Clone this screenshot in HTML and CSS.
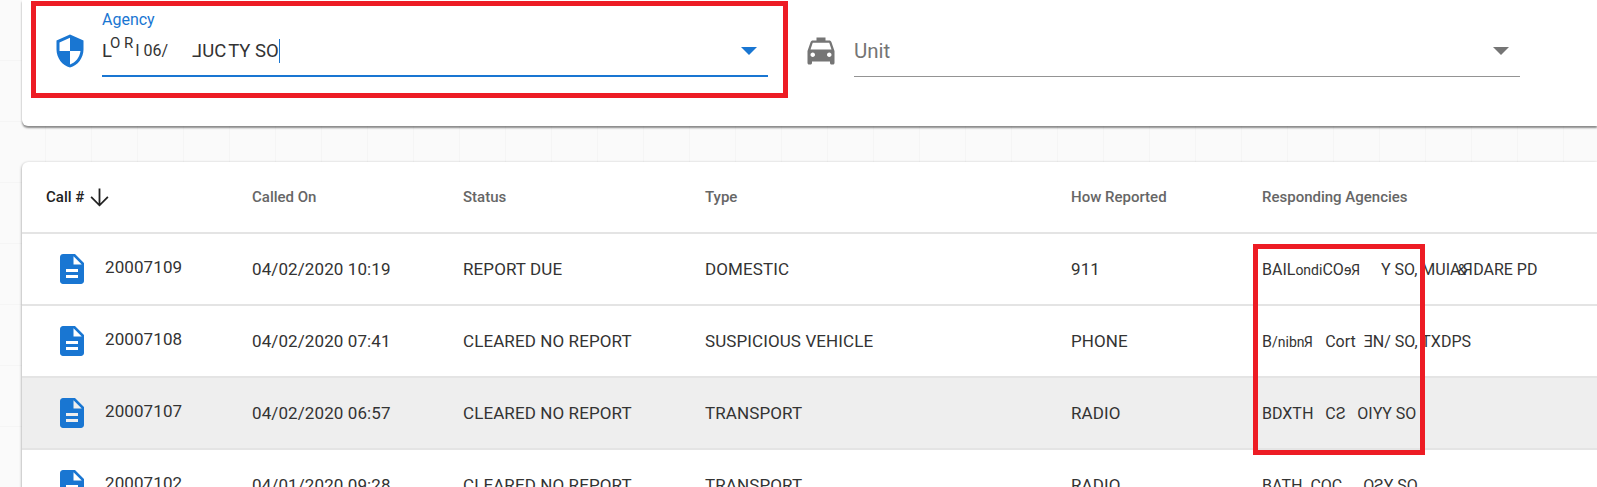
FILE: index.html
```html
<!DOCTYPE html>
<html>
<head>
    <title>Calls</title>
    <link rel="stylesheet" href="styles.css">
</head>
<body>
    <div class="page">
        <div class="card filters">
            <div class="field field-agency">
                <svg class="icon icon-blue" viewBox="0 0 24 24"><path d="M12 1L3 5v6c0 5.55 3.84 10.74 9 12 5.16-1.26 9-6.45 9-12V5l-9-4zm0 10.99h7c-.53 4.12-3.28 7.79-7 8.94V12H5V6.3l7-3.11v8.8z"/></svg>
                <div class="select select-active">
                    <label class="select-label">Agency</label>
                    <div class="select-value">
                        <span class="garble">L<sup>O R</sup></span>
                        <span class="gap gap-s"></span>
                        <span class="garble garble-s">I 06/</span>
                        <span class="gap"></span>
                        <span class="garble"><span class="flip">L</span>UC</span>
                        <span class="gap gap-xs"></span>
                        <span class="garble">TY SO</span><span class="caret"></span>
                    </div>
                    <span class="arrow"></span>
                </div>
            </div>
            <div class="field field-unit">
                <svg class="icon icon-grey" viewBox="0 0 24 24"><path d="M18.92 6.01C18.72 5.42 18.16 5 17.5 5H15V3H9v2H6.5c-.66 0-1.21.42-1.42 1.01L3 12v8c0 .55.45 1 1 1h1c.55 0 1-.45 1-1v-1h12v1c0 .55.45 1 1 1h1c.55 0 1-.45 1-1v-8l-2.08-5.99zM6.5 16c-.83 0-1.5-.67-1.5-1.5S5.67 13 6.5 13s1.5.67 1.5 1.5S7.33 16 6.5 16zm11 0c-.83 0-1.5-.67-1.5-1.5s.67-1.5 1.5-1.5 1.5.67 1.5 1.5-.67 1.5-1.5 1.5zM5 11l1.5-4.5h11L19 11H5z"/></svg>
                <div class="select">
                    <div class="select-value placeholder">Unit</div>
                    <span class="arrow"></span>
                </div>
            </div>
        </div>

        <div class="card results">
            <table>
                <thead>
                    <tr>
                        <th class="col-call sorted">Call # <svg class="sort-icon" viewBox="0 0 24 24"><path d="M20 12l-1.1-1.1L12.8 17V4h-1.6v13l-6.1-6.1L4 12l8 8 8-8z"/></svg></th>
                        <th class="col-date">Called On</th>
                        <th class="col-status">Status</th>
                        <th class="col-type">Type</th>
                        <th class="col-how">How Reported</th>
                        <th>Responding Agencies</th>
                    </tr>
                </thead>
                <tbody>
                    <tr>
                        <td><div class="call"><svg class="icon icon-blue" viewBox="0 0 24 24"><path d="M14 2H6c-1.1 0-1.99.9-1.99 2L4 20c0 1.1.89 2 1.99 2H18c1.1 0 2-.9 2-2V8l-6-6zm2 16H8v-2h8v2zm0-4H8v-2h8v2zm-3-5V3.5L18.5 9H13z"/></svg><span>20007109</span></div></td>
                        <td>04/02/2020 10:19</td>
                        <td>REPORT DUE</td>
                        <td>DOMESTIC</td>
                        <td>911</td>
                        <td class="agencies">BAIL<small>ondi</small>CO<small class="flip">Re</small><span class="gap-l"></span>Y SO, MUIA<small class="tight">&amp;</small><span class="flip tight">R</span>DARE PD</td>
                    </tr>
                    <tr>
                        <td><div class="call"><svg class="icon icon-blue" viewBox="0 0 24 24"><path d="M14 2H6c-1.1 0-1.99.9-1.99 2L4 20c0 1.1.89 2 1.99 2H18c1.1 0 2-.9 2-2V8l-6-6zm2 16H8v-2h8v2zm0-4H8v-2h8v2zm-3-5V3.5L18.5 9H13z"/></svg><span>20007108</span></div></td>
                        <td>04/02/2020 07:41</td>
                        <td>CLEARED NO REPORT</td>
                        <td>SUSPICIOUS VEHICLE</td>
                        <td>PHONE</td>
                        <td class="agencies">B<small>/nibn</small><small class="flip">R</small><span class="gap-m"></span>Cort<span class="gap-s2"></span><span class="flip">E</span>N/ SO, TXDPS</td>
                    </tr>
                    <tr class="row-selected">
                        <td><div class="call"><svg class="icon icon-blue" viewBox="0 0 24 24"><path d="M14 2H6c-1.1 0-1.99.9-1.99 2L4 20c0 1.1.89 2 1.99 2H18c1.1 0 2-.9 2-2V8l-6-6zm2 16H8v-2h8v2zm0-4H8v-2h8v2zm-3-5V3.5L18.5 9H13z"/></svg><span>20007107</span></div></td>
                        <td>04/02/2020 06:57</td>
                        <td>CLEARED NO REPORT</td>
                        <td>TRANSPORT</td>
                        <td>RADIO</td>
                        <td class="agencies">BDXT<span class="flip">H</span><span class="gap-m"></span>C<span class="flip">S</span><span class="gap-m"></span>OI<span class="flip">Y</span>Y SO</td>
                    </tr>
                    <tr>
                        <td><div class="call"><svg class="icon icon-blue" viewBox="0 0 24 24"><path d="M14 2H6c-1.1 0-1.99.9-1.99 2L4 20c0 1.1.89 2 1.99 2H18c1.1 0 2-.9 2-2V8l-6-6zm2 16H8v-2h8v2zm0-4H8v-2h8v2zm-3-5V3.5L18.5 9H13z"/></svg><span>20007102</span></div></td>
                        <td>04/01/2020 09:28</td>
                        <td>CLEARED NO REPORT</td>
                        <td>TRANSPORT</td>
                        <td>RADIO</td>
                        <td class="agencies">BAT<span class="flip">H</span><span class="gap-s2"></span>COC<span class="gap-l"></span>O<span class="flip">S</span>Y SO</td>
                    </tr>
                </tbody>
            </table>
        </div>
    </div>

    <div class="mark mark-agency"></div>
    <div class="mark mark-responding"></div>
</body>
</html>
```

FILE: styles.css
```css
html, body {
    margin: 0;
    padding: 0;
    height: 487px;
    overflow: hidden;
}
body {
    position: relative;
    font-family: Roboto, "Liberation Sans", sans-serif;
    color: #333;
    background-color: #fafafa;
    background-image:
        repeating-linear-gradient(90deg, transparent 0, transparent 45px, #f5f5f5 45px, #f5f5f5 46px),
        repeating-linear-gradient(0deg, transparent 0, transparent 60px, #f5f5f5 60px, #f5f5f5 61px);
}
.page {
    padding-left: 22px;
    display: flex;
    flex-direction: column;
    gap: 36px;
}
.card {
    background-color: #fff;
    border-radius: 4px;
    box-shadow: 0 1px 3px rgba(0, 0, 0, 0.45);
}

/* filter bar */
.filters {
    height: 126px;
    display: flex;
    border-radius: 0 0 0 6px;
    box-shadow: 0 2px 2px rgba(0, 0, 0, 0.45);
}
.field {
    display: flex;
    align-items: flex-start;
}
.field-agency {
    width: 765px;
    padding-left: 30px;
    box-sizing: border-box;
}
.field-unit {
    padding-left: 16px;
}
.field .icon {
    margin-top: 33px;
}
.icon {
    width: 36px;
    height: 36px;
    flex: none;
    fill: currentColor;
}
.icon-blue { color: #1976d2; }
.icon-grey { color: #757575; }

.select {
    flex: none;
    width: 666px;
    height: 77px;
    margin-left: 15px;
    position: relative;
    box-sizing: border-box;
    border-bottom: 1px solid #949494;
}
.field-agency .select {
    margin-left: 14px;
}
.select-active {
    border-bottom: 2px solid #1976d2;
}
.select-label {
    display: block;
    position: absolute;
    top: 10px;
    left: 0;
    font-size: 16px;
    line-height: 20px;
    color: #1976d2;
}
.select-value {
    position: absolute;
    top: 39px;
    left: 0;
    display: flex;
    font-size: 18.5px;
    line-height: 24px;
    white-space: pre;
    color: #333;
}
.placeholder {
    font-size: 20.5px;
    color: #757575;
}
.garble sup {
    font-size: 15px;
    line-height: 0;
    vertical-align: 9px;
    margin-left: -2px;
}
.garble-s {
    font-size: 16px;
}
.gap { width: 24px; }
.gap-s { width: 2px; }
.gap-xs { width: 2px; }
.caret {
    display: inline-block;
    width: 1px;
    height: 24px;
    background-color: #1976d2;
}
.arrow {
    position: absolute;
    top: 47px;
    right: 11px;
    width: 0;
    height: 0;
    border-left: 8px solid transparent;
    border-right: 8px solid transparent;
    border-top: 8px solid #757575;
}
.select-active .arrow {
    border-top-color: #1976d2;
}
.flip {
    display: inline-block;
    transform: scaleX(-1);
}

/* results table */
.results {
    height: 400px;
    border-radius: 6px 0 0 0;
}
table {
    width: 100%;
    border-collapse: collapse;
    table-layout: fixed;
}
th, td {
    padding: 0;
    text-align: left;
    border-bottom: 2px solid #e4e4e4;
}
th {
    height: 70px;
    font-size: 15px;
    font-weight: 500;
    color: #666;
    vertical-align: middle;
}
td {
    height: 70px;
    font-size: 17px;
    color: #333;
    letter-spacing: 0.1px;
}
th:first-child { padding-left: 24px; }
.col-call { width: 206px; }
.col-date { width: 211px; }
.col-status { width: 242px; }
.col-type { width: 366px; }
.col-how { width: 191px; }
.sorted {
    color: #222;
    white-space: nowrap;
}
.sort-icon {
    width: 27px;
    height: 27px;
    vertical-align: -9px;
    margin-left: -2px;
    fill: #222;
}
.call {
    display: flex;
    align-items: flex-start;
    padding-left: 32px;
}
.call span {
    margin-left: 15px;
    margin-top: 4px;
    line-height: 24px;
}
.row-selected td {
    background-color: #eee;
}
.agencies {
    white-space: nowrap;
    font-size: 16px;
    letter-spacing: 0;
}
.agencies small {
    font-size: 14px;
}
.agencies .tight {
    margin-left: -3px;
}
.gap-l,
.gap-m,
.gap-s2 {
    display: inline-block;
}
.gap-l { width: 21px; }
.gap-m { width: 12px; }
.gap-s2 { width: 8px; }

/* annotation boxes drawn over the screenshot */
.mark {
    position: absolute;
    box-sizing: border-box;
    border: 5px solid #ed1c24;
}
.mark-agency {
    left: 31px;
    top: 1px;
    width: 757px;
    height: 97px;
}
.mark-responding {
    left: 1253px;
    top: 244px;
    width: 172px;
    height: 211px;
}
```
